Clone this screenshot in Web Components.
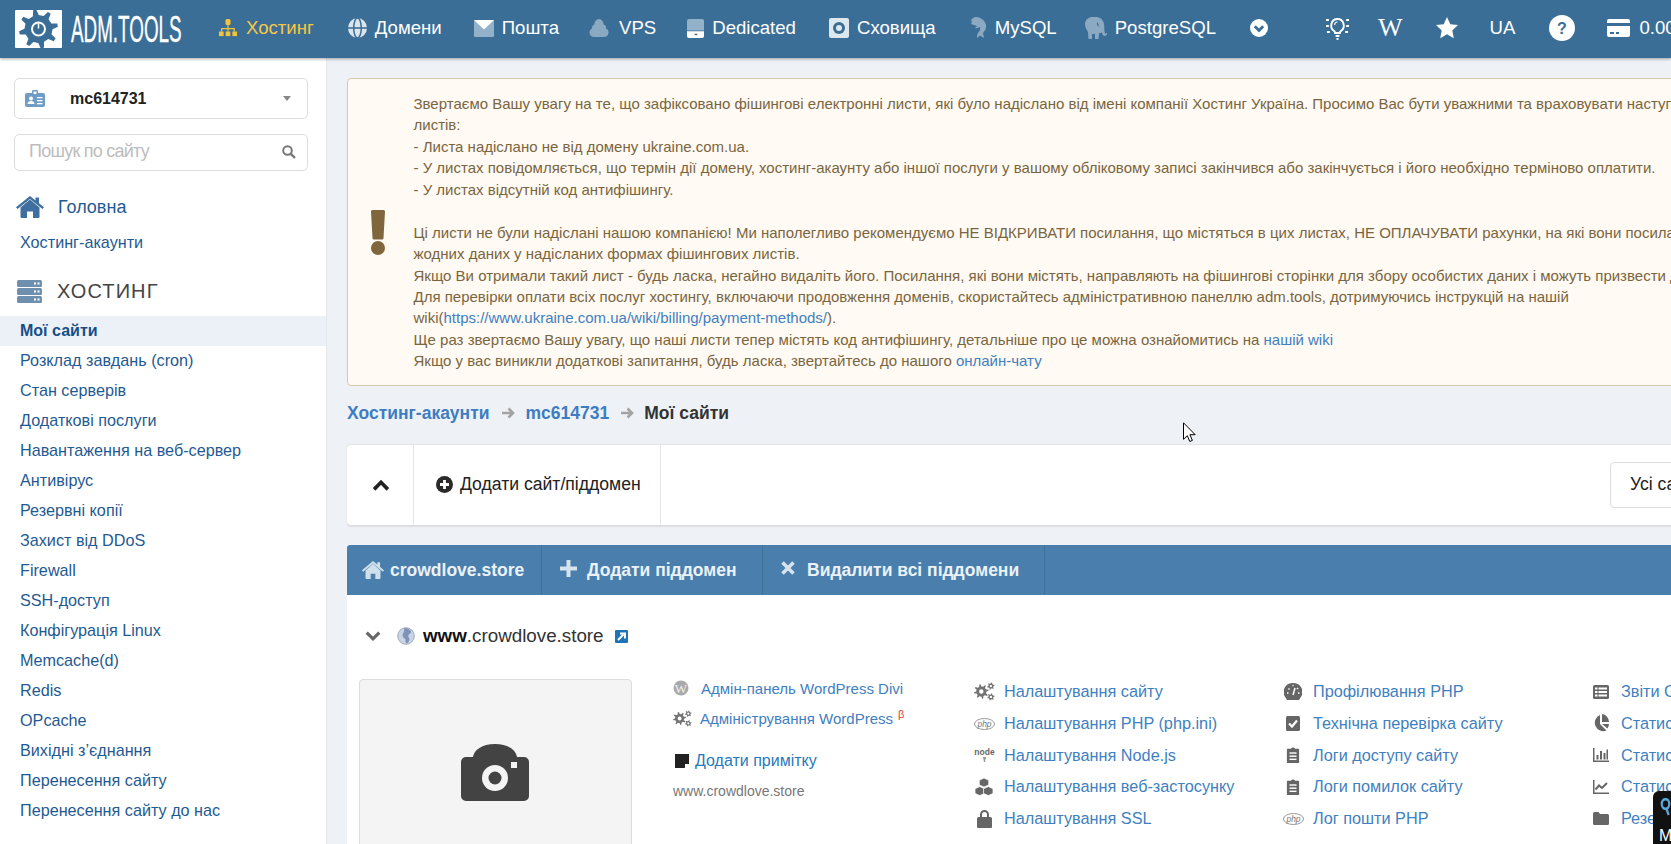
<!DOCTYPE html>
<html lang="uk">
<head>
<meta charset="utf-8">
<title>ADM.TOOLS</title>
<style>
html,body{margin:0;padding:0;height:100%;overflow:hidden;background:#eef2f6;font-family:"Liberation Sans",Arial,sans-serif}
</style>
</head>
<body>
<adm-app></adm-app>
<script>
function gear(cx,cy,r,rIn,n,hole){
  let d='';const st=Math.PI*2/n;
  for(let i=0;i<n;i++){
    const a=i*st-st/2;
    const pts=[[rIn,a-st*.02],[r,a+st*.14],[r,a+st*.36],[rIn,a+st*.52]];
    pts.forEach((p,j)=>{const x=cx+p[0]*Math.cos(p[1]),y=cy+p[0]*Math.sin(p[1]);d+=(i==0&&j==0?'M':'L')+x.toFixed(2)+' '+y.toFixed(2)});
  }
  d+='Z';
  if(hole){d+=`M${cx-hole} ${cy}a${hole} ${hole} 0 1 0 ${hole*2} 0a${hole} ${hole} 0 1 0 ${-hole*2} 0Z`}
  return d;
}
const gearsSvg=`<g fill="#737373"><path fill-rule="evenodd" d="${gear(8,10.5,8,5.6,8,2.4)}"/><path fill-rule="evenodd" d="${gear(18.5,4.5,4,2.8,6,1.3)}"/><path fill-rule="evenodd" d="${gear(18.5,16.5,4,2.8,6,1.3)}"/></g>`;
const clip=`<path fill="#666" d="M2 3h3.500a3 3 0 0 1 5 0H14a1 1 0 0 1 1 1v14a1 1 0 0 1-1 1H2a1 1 0 0 1-1-1V4a1 1 0 0 1 1-1z"/><g fill="#fff"><rect x="4" y="7" width="8" height="1.600"/><rect x="4" y="10.500" width="8" height="1.600"/><rect x="4" y="14" width="8" height="1.600"/></g>`;
const ICONS={
 hier:['0 0 18 18',`<g fill="#f5c33b"><rect x="6.500" y="0" width="5" height="6" rx="1.500"/><rect x="0" y="12.500" width="4.600" height="4.600"/><rect x="6.700" y="12.500" width="4.600" height="4.600"/><rect x="13.400" y="12.500" width="4.600" height="4.600"/><path d="M8.400 6h1.200v3h6.200v3.500h-1.200v-2.300H9.600v2.300H8.400v-2.300H3.200v2.300H2V9h6.400z"/></g>`],
 globe:['0 0 20 20',`<circle cx="10" cy="10" r="10" fill="#dbe5ec"/><g fill="none" stroke="#3b6e96" stroke-width="1.600"><ellipse cx="10" cy="10" rx="4" ry="10"/><path d="M0 10h20"/></g>`],
 mail:['0 0 20 18',`<rect y="0" width="20" height="18" rx="1" fill="#93b2c9"/><path d="M0 0h20L10 10z" fill="#fff"/>`],
 cloud:['0 0 20 20',`<path fill="#8baac2" d="M5 19a4.500 4.500 0 0 1-2-8.500 4 4 0 0 1 2.500-4.200A4.800 4.800 0 0 1 10 1a4.800 4.800 0 0 1 4.400 5.200 4 4 0 0 1 2.700 4.300A4.500 4.500 0 0 1 15 19z"/>`],
 ded:['0 0 18 20',`<path fill="#93b2c9" d="M2 0h14a2 2 0 0 1 2 2v10H0V2a2 2 0 0 1 2-2z"/><path fill="#fff" d="M0 13h18v5a2 2 0 0 1-2 2H2a2 2 0 0 1-2-2z"/><rect x="8" y="15.500" width="3" height="1.500" fill="#3b6e96"/>`],
 stor:['0 0 20 20',`<rect width="20" height="20" rx="2" fill="#dce7ee"/><circle cx="10" cy="10" r="6" fill="#3b6e96"/><circle cx="10" cy="10" r="3" fill="#dce7ee"/>`],
 dolphin:['0 0 17 22',`<path fill="#8baac2" d="M6 0c4 0 9 3 10 8 .5 3-1 6-3 8l1 5-4-2.500-3 2.500c0-2 0-3 1-5 2-2 2.500-4 2-6-1.500 1-3.500 1.500-5 1l2-2-6-2C2 6 2 4 1 3c2-2 3-3 5-3z"/>`],
 eleph:['0 0 22 22',`<path fill="#8baac2" d="M9 0c5-.5 9 2 10 7 .4 3 .2 6 .8 9 .2 1 1.200 1 1.200 0h1c0 2.500-2 3.500-3.500 2.500-1-.7-1.300-2-1.500-3-1 .5-2 .7-3 .8l-.5 5.700h-3.500v-5H7v5H3.500l-.5-7C1.500 12.500 0 10 0 7 0 3 4-.5 9 0z"/><path fill="#3b6e96" d="M12 5c-.5 2 0 4 2 4.500-.3-1.500-.5-3-2-4.500z"/>`],
 chevc:['0 0 18 18',`<circle cx="9" cy="9" r="9" fill="#fff"/><path d="M4.800 7.300 9 11.500l4.200-4.200" fill="none" stroke="#3b6e96" stroke-width="2.800"/>`],
 bulb:['0 0 24 24',`<g fill="none" stroke="#fff"><path stroke-width="2" d="M12 3a6.500 6.500 0 0 0-3.500 12c.6.500 1 1 1 2h5c0-1 .4-1.500 1-2A6.500 6.500 0 0 0 12 3z"/><path stroke-width="2" d="M10 20h4M11 23h2"/><path stroke-width="1.200" d="M12 6a3 3 0 0 0-3 3"/></g><g fill="#fff"><rect x="0" y="3" width="3" height="2"/><rect x="0" y="9" width="3" height="2"/><rect x="1" y="15" width="3" height="2"/><rect x="21" y="3" width="3" height="2"/><rect x="21" y="9" width="3" height="2"/><rect x="20" y="15" width="3" height="2"/></g>`],
 star:['0 0 22 22',`<path fill="#fff" d="M11 0l3.300 7.200 7.700.9-5.700 5.300 1.500 7.800L11 17.300 4.200 21.200l1.500-7.800L0 8.100l7.700-.9z"/>`],
 q:['0 0 26 26',`<ellipse cx="13" cy="13" rx="13" ry="13" fill="#fff"/><text x="13" y="19" text-anchor="middle" font-family="Liberation Sans" font-weight="700" font-size="16" fill="#3b6e96">?</text>`],
 card:['0 0 23 18',`<path fill="#fff" d="M2 0h19a2 2 0 0 1 2 2v2H0V2a2 2 0 0 1 2-2zM0 7h23v9a2 2 0 0 1-2 2H2a2 2 0 0 1-2-2zm3 6v2h4v-2zm6 0v2h3v-2z"/>`],
 idcard:['0 0 20 17',`<path fill="#6f9cc4" d="M2 3h5V1.500C7 .5 7.500 0 8.500 0h3c1 0 1.500.5 1.500 1.500V3h5a2 2 0 0 1 2 2v10a2 2 0 0 1-2 2H2a2 2 0 0 1-2-2V5a2 2 0 0 1 2-2z"/><g fill="#fff"><rect x="8.500" y="1.500" width="3" height="2.500"/><circle cx="6" cy="8.500" r="2"/><path d="M2.500 14c0-2 1.500-3 3.500-3s3.500 1 3.500 3z"/><rect x="12" y="7" width="5.500" height="1.300"/><rect x="12" y="10" width="5.500" height="1.300"/><rect x="12" y="13" width="5.500" height="1.300"/></g>`],
 search:['0 0 14 14',`<circle cx="5.500" cy="5.500" r="4.300" fill="none" stroke="#777" stroke-width="2"/><path d="M8.800 8.800 13 13" stroke="#777" stroke-width="2.400"/>`],
 home:['0 0 28 22',`<path fill="currentColor" d="M14 3.500 4.500 11.500V21a1 1 0 0 0 1 1H11v-6.500h6V22h5.500a1 1 0 0 0 1-1v-9.500z"/><path fill="currentColor" d="M14 0 0 11.200l1.500 1.800L14 3l12.500 10 1.500-1.800-5-4V1.500h-3.500v2.900z"/>`],
 server:['0 0 25 23',`<g fill="#6f8faf"><rect width="25" height="7" rx="1.500"/><rect y="8" width="25" height="7" rx="1.500"/><rect y="16" width="25" height="7" rx="1.500"/></g><g fill="#fff"><rect x="17" y="2.500" width="2" height="2"/><rect x="20.500" y="2.500" width="2" height="2"/><rect x="17" y="10.500" width="2" height="2"/><rect x="20.500" y="10.500" width="2" height="2"/><rect x="17" y="18.500" width="2" height="2"/><rect x="20.500" y="18.500" width="2" height="2"/></g>`],
 bang:['0 0 14 45',`<path fill="#7f663d" d="M1.500 0h11A1.500 1.500 0 0 1 14 1.500L12.500 28a1.500 1.500 0 0 1-1.500 1.500H3A1.500 1.500 0 0 1 1.500 28L0 1.500A1.500 1.500 0 0 1 1.500 0z"/><circle cx="7" cy="38" r="7" fill="#7f663d"/>`],
 arrow:['0 0 14 14',`<path d="M1 7h11M7.500 2.500 12 7l-4.500 4.500" fill="none" stroke="#a3a3a3" stroke-width="2.600"/>`],
 up:['0 0 17 11',`<path d="M2 9.500 8.500 3l6.500 6.500" fill="none" stroke="#222" stroke-width="3.400"/>`],
 plusc:['0 0 17 17',`<circle cx="8.500" cy="8.500" r="8.500" fill="#2a2a2a"/><path d="M8.500 4v9M4 8.500h9" stroke="#fff" stroke-width="2.800"/>`],
 plus:['0 0 17 17',`<path d="M8.500 0v17M0 8.500h17" stroke="#d6e4ee" stroke-width="4"/>`],
 x:['0 0 14 14',`<path d="M1.500 1.500l11 11M12.500 1.500l-11 11" stroke="#d6e4ee" stroke-width="3.600"/>`],
 down:['0 0 14 9',`<path d="M1.500 1.500 7 7l5.500-5.500" fill="none" stroke="#666" stroke-width="2.800"/>`],
 wglobe:['0 0 18 18',`<circle cx="9" cy="9" r="8.300" fill="#c9d4e6" stroke="#9fa9b8" stroke-width="1"/><path fill="#7f93b8" d="M7 1.500c3-1 6 1 7 3 .5 1.500-.5 2-2 2.500-1 1.500-1 3 .5 4.500 0 2-1 4-2.500 5-2-1-1.500-3-1.500-4.500-2-1-3-2.500-3-4.500 1-2 2-3 1.500-6z"/>`],
 ext:['0 0 13 13',`<rect width="13" height="13" rx="1" fill="#1f74b8"/><path d="M3 10l5.500-5.500M5 3.500h5v5" fill="none" stroke="#fff" stroke-width="2"/>`],
 camera:['0 0 68 57',`<path fill="#434343" d="M5 13h7c1-7 9-13 22-13s21 6 22 13h7a5 5 0 0 1 5 5v34a5 5 0 0 1-5 5H5a5 5 0 0 1-5-5V18a5 5 0 0 1 5-5z"/><circle cx="34" cy="34" r="13" fill="#f4f4f4"/><circle cx="34" cy="34" r="6.500" fill="#434343"/><rect x="50" y="18" width="6" height="6" fill="#f4f4f4"/>`],
 wp:['0 0 16 16',`<circle cx="8" cy="8" r="7.500" fill="#aaa"/><text x="8" y="12.500" text-anchor="middle" font-family="Liberation Serif" font-size="13" fill="#eee">W</text>`],
 gears:['0 0 23 21',gearsSvg],
 note:['0 0 14 14',`<path fill="#222" d="M0 0h14v9.500L9.500 14H0z"/><path fill="#fff" d="M10 14v-4h4z"/>`],
 php:['0 0 21 12',`<ellipse cx="10.500" cy="6" rx="10" ry="5.500" fill="#fff" stroke="#999"/><text x="10.500" y="8.800" text-anchor="middle" font-family="Liberation Sans" font-style="italic" font-size="8.500" fill="#777">php</text>`],
 node:['0 0 21 14',`<text x="10.500" y="7" text-anchor="middle" font-family="Liberation Sans" font-weight="700" font-size="8.500" fill="#666">node</text><path d="M9 9h3l-1 5h-1z" fill="#999"/>`],
 cubes:['0 0 19 19',`<g fill="#666" stroke="#fff" stroke-width=".8"><path d="M9.500 0l5 2.300v5l-5 2.300-5-2.300v-5z"/><path d="M5 9l5 2.300v5L5 18.600 0 16.300v-5z"/><path d="M14 9l5 2.300v5l-5 2.300-5-2.300v-5z"/></g>`],
 lock:['0 0 15 19',`<path fill="#666" d="M3 8V5.500a4.500 4.500 0 0 1 9 0V8h1.500A1.500 1.500 0 0 1 15 9.500V18a1 1 0 0 1-1 1H1a1 1 0 0 1-1-1V9.500A1.500 1.500 0 0 1 1.500 8zm2 0h5V5.500a2.500 2.500 0 0 0-5 0z"/>`],
 gauge:['0 0 18 17',`<path fill="#666" d="M9 0a9 9 0 0 1 7.500 14.500L15 17H3l-1.500-2.500A9 9 0 0 1 9 0z"/><g stroke="#fff" stroke-width="1.500"><path d="M9 12l2-7"/><path d="M3 10h1.500M4.500 5.500l1 1M13 6l1-1M14 10h1.500M8.500 2.500h1"/></g>`],
 check:['0 0 14 15',`<rect width="14" height="15" rx="1.500" fill="#666"/><path d="M3 7.500l3 3 5-6" fill="none" stroke="#fff" stroke-width="2.200"/>`],
 clip:['0 0 16 20',clip],
 table:['0 0 16 14',`<rect width="16" height="14" rx="1.500" fill="#666"/><g fill="#fff"><rect x="2" y="2.500" width="2.500" height="2"/><rect x="5.500" y="2.500" width="8.500" height="2"/><rect x="2" y="6" width="2.500" height="2"/><rect x="5.500" y="6" width="8.500" height="2"/><rect x="2" y="9.500" width="2.500" height="2"/><rect x="5.500" y="9.500" width="8.500" height="2"/></g>`],
 pie:['0 0 16 19',`<path fill="#666" d="M7 1v9l6.500 6.500A8 8 0 1 1 7 1z"/><path fill="#666" d="M9 0a8 8 0 0 1 7 8H9zM9 10h7a8 8 0 0 1-1.500 4.500z"/>`],
 bars:['0 0 16 14',`<path fill="#666" d="M0 0h1.500v12.500H16V14H0zM3.500 7h2v4.500h-2zM7 3h2v8.500H7zM10.500 5h2v6.500h-2zM13.500 1.500h1.500v10h-1.500z"/>`],
 line:['0 0 16 14',`<path fill="#666" d="M0 0h1.500v12.500H16V14H0z"/><path fill="none" stroke="#666" stroke-width="2" d="M2.500 9.500l3.500-4 3 2.500 5-5"/>`],
 folder:['0 0 16 13',`<path fill="#666" d="M1.500 0h4L7 2h7.500A1.500 1.500 0 0 1 16 3.500V11.500a1.500 1.500 0 0 1-1.500 1.500h-13A1.500 1.500 0 0 1 0 11.500v-10A1.500 1.500 0 0 1 1.500 0z"/>`],
 logo:['0 0 47 38',`<rect width="47" height="38" rx="1" fill="#fff"/><path fill="#3b6e96" d="${gear(23.5,19,19.5,14,8)}"/><circle cx="23.500" cy="19" r="6.500" fill="none" stroke="#fff" stroke-width="2"/><path d="M23.500 14v5" stroke="#3b6e96" stroke-width="3"/><path d="M23.500 13.500v5" stroke="#fff" stroke-width="1.500"/>`],
 widget:['0 0 14 18',`<circle cx="7" cy="6" r="4.800" fill="none" stroke="#5aa6d8" stroke-width="2.800"/><path d="M8 10l3 7" stroke="#5aa6d8" stroke-width="3"/>`],
 cursor:['0 0 13 21',`<path fill="#fff" stroke="#000" stroke-width="1" d="M.5.800v16.500l3.800-3.600 2.500 5.800 2.600-1.100-2.500-5.700h5.300z"/>`]
};
function define(name,html,extra){
  const t=document.createElement('template');t.innerHTML=html;
  customElements.define(name,class extends HTMLElement{
    constructor(){super();this.attachShadow({mode:'open'}).appendChild(t.content.cloneNode(true));}
    connectedCallback(){extra&&extra.call(this)}
  });
}
customElements.define('x-icon',class extends HTMLElement{
  connectedCallback(){
    if(this.shadowRoot)return;
    const [vb,body]=ICONS[this.getAttribute('n')];
    const w=this.getAttribute('w'),h=this.getAttribute('h');
    this.attachShadow({mode:'open'}).innerHTML=`<style>:host{display:inline-flex;flex:none;line-height:0}</style><svg xmlns="http://www.w3.org/2000/svg" viewBox="${vb}" width="${w}" height="${h}" preserveAspectRatio="none" fill="currentColor">${body}</svg>`;
  }
});
define('nav-item',`<style>
:host{display:flex;align-items:center;flex:none;gap:8px;color:#fff;font-size:18.6px;white-space:nowrap;margin-bottom:2px}
:host([active]){color:#f7c744}
</style><slot name="icon"></slot><slot></slot>`);
define('top-bar',`<style>
:host{display:flex;align-items:center;height:58px;flex:none;background:#3b6e96;box-shadow:0 1px 3px rgba(0,0,0,.35);position:relative;z-index:2;overflow:hidden;padding-left:15px;box-sizing:border-box}
.name{display:inline-block;color:#fff;font-size:37.7px;line-height:38px;transform:scaleX(.5);transform-origin:0 50%;-webkit-text-stroke:.35px #fff;width:109px;margin-left:9px;white-space:nowrap}
</style><x-icon n="logo" w="47" h="38"></x-icon><span class="name">ADM.TOOLS</span><slot></slot>`);
define('side-link',`<style>
:host{display:flex;align-items:center;height:30px;box-sizing:border-box;padding:0 0 2px 20px;font-size:16.2px;color:#1f5a92}
:host([active]){background:#ecf1f8;font-weight:700;color:#174e86;font-size:16px;padding-bottom:0}
</style><slot></slot>`);
define('side-bar',`<style>
:host{display:flex;flex-direction:column;width:327px;flex:none;box-sizing:border-box;background:#fff;border-right:1px solid #e4e7ea;padding-top:20px;overflow:hidden}
.sel{display:flex;align-items:center;height:41px;box-sizing:border-box;margin:0 18px 0 14px;border:1px solid #ddd;border-radius:5px;padding:0 16px 0 10px}
.sel b{font-size:16px;color:#222;margin-left:25px;flex:1}
.caret{width:0;height:0;border:4px solid transparent;border-top:5px solid #888;border-bottom:0}
.srch{display:flex;align-items:center;justify-content:space-between;height:37px;box-sizing:border-box;margin:15px 18px 0 14px;border:1px solid #ddd;border-radius:5px;padding:0 11px 2px 14px;color:#bdbdbd;font-size:18px;letter-spacing:-.75px}
.home{display:flex;align-items:center;gap:14px;margin:25px 0 0 16px;height:22px;color:#3f6f9e}
.home span{font-size:18px;color:#1f5a92}
.acc{margin-top:10px}
.hd{display:flex;align-items:center;gap:15px;margin:22px 0 13px 17px;height:23px;font-size:20px;letter-spacing:1.1px;color:#444}
</style>
<div class="sel"><x-icon n="idcard" w="20" h="17"></x-icon><b>mc614731</b><i class="caret"></i></div>
<div class="srch"><span>Пошук по сайту</span><x-icon n="search" w="14" h="14"></x-icon></div>
<div class="home"><x-icon n="home" w="28" h="22"></x-icon><span>Головна</span></div>
<div class="acc"><side-link>Хостинг-акаунти</side-link></div>
<div class="hd"><x-icon n="server" w="25" h="23"></x-icon><span>ХОСТИНГ</span></div>
<slot></slot>`);
define('alert-box',`<style>
:host{display:flex;box-sizing:border-box;width:1400px;height:308px;background:#fffaf3;border:1px solid #d8cbac;border-radius:4px;padding:14px 0;color:#7a6540;font-size:15px;line-height:21.43px;white-space:nowrap}
.i{width:65.5px;flex:none;display:flex;align-items:center;padding-left:23px;box-sizing:border-box}
</style><div class="i"><x-icon n="bang" w="14" h="45"></x-icon></div><div><slot></slot></div>`);
define('bread-crumbs',`<style>
:host{display:flex;align-items:center;gap:11px;height:54px;margin-bottom:4px;font-size:17.5px;font-weight:700;color:#3e7cc2;white-space:nowrap}
.last{color:#333;margin-left:-1px}
</style><span>Хостинг-акаунти</span><x-icon n="arrow" w="14" h="14"></x-icon><span>mc614731</span><x-icon n="arrow" w="14" h="14"></x-icon><span class="last">Мої сайти</span>`);
define('tool-bar',`<style>
:host{display:flex;align-items:stretch;box-sizing:border-box;width:1400px;height:81px;background:#fff;border-top:1px solid #e2e4e6;border-radius:4px;box-shadow:0 2px 1px #dcdee2,0 0 1px #ddd;font-size:17.6px;color:#222;white-space:nowrap}
.c{width:67px;flex:none;display:flex;align-items:center;justify-content:center;border-right:1px solid #e6e6e6;box-sizing:border-box;padding-left:2px}
.a{display:flex;align-items:center;gap:7px;padding:0 19px 2px 22px;border-right:1px solid #e6e6e6}
.sp{flex:1}
.f{align-self:center;margin-right:17px;border:1px solid #ddd;border-radius:4px;height:46px;width:120px;box-sizing:border-box;padding:0 0 2px 19px;display:flex;align-items:center}
</style><div class="c"><x-icon n="up" w="18" h="12"></x-icon></div><div class="a"><x-icon n="plusc" w="17" h="17"></x-icon><span>Додати сайт/піддомен</span></div><div class="sp"></div><div class="f">Усі сайти</div>`);
define('bar-seg',`<style>
:host{display:flex;align-items:center;height:50px;box-sizing:border-box;border-right:1px solid #3f7299;font-size:17.5px;font-weight:700;color:#eaf2f8;white-space:nowrap}
</style><slot></slot>`);
define('ico-link',`<style>
:host{display:flex;align-items:center;height:31.7px;font-size:16.25px;color:#3f80c0;white-space:nowrap}
.b{width:20px;display:flex;justify-content:center;margin-right:10px;flex:none}
</style><span class="b"><slot name="i"></slot></span><slot></slot>`);
define('site-panel',`<style>
:host{display:block;width:1400px;background:#fff;margin-top:20px}
.bar{display:flex;background:#4a7fad;height:50px;border-radius:3px 3px 0 0}
.h{padding-left:15px;padding-right:18px;width:195px;box-sizing:border-box;gap:6px}
.p{padding-left:18px;width:221px;box-sizing:border-box;gap:10px}
.x{padding-left:18px;width:282px;box-sizing:border-box;gap:12px}
.up{margin-top:-4px;display:flex}
.www{display:flex;align-items:center;height:84px;padding:0 0 2px 18px;box-sizing:border-box;font-size:18.8px;color:#333;white-space:nowrap}
.www b{color:#111;font-weight:700}
.body{display:flex;padding-left:12px}
.shot{width:273px;height:260px;flex:none;box-sizing:border-box;background:#f4f4f4;border:1px solid #ddd;border-radius:4px;display:flex;justify-content:center;padding:64px 2px 0 0}
.mid{width:301px;margin-left:41px;flex:none;font-size:15px;color:#3f80c0;white-space:nowrap}
.m{display:flex;align-items:center;height:30px}
.m:first-child{margin-top:-6px}
sup{color:#e03b3b;font-size:11px;line-height:0;margin:-8px 0 0 5px}
.n{margin-top:13px;font-size:16px;height:30px;gap:6px;color:#2878bd;padding-left:2px}
.u{color:#777;font-size:14px}
.cols{display:grid;grid-template-columns:309px 308px 320px;margin-top:-3px;align-self:flex-start}
</style>
<div class="bar"><bar-seg class="h"><x-icon n="home" w="22" h="18" style="color:#cfe0ec"></x-icon><span>crowdlove.store</span></bar-seg><bar-seg class="p"><span class="up"><x-icon n="plus" w="17" h="17"></x-icon></span><span>Додати піддомен</span></bar-seg><bar-seg class="x"><span class="up"><x-icon n="x" w="14" h="14"></x-icon></span><span>Видалити всі піддомени</span></bar-seg></div>
<div class="www"><x-icon n="down" w="16" h="10"></x-icon><span style="width:16px"></span><x-icon n="wglobe" w="18" h="18"></x-icon><span style="width:8px"></span><span><b>www</b>.crowdlove.store</span><span style="width:11px"></span><x-icon n="ext" w="13" h="13"></x-icon></div>
<div class="body">
<div class="shot"><x-icon n="camera" w="68" h="57"></x-icon></div>
<div class="mid">
<div class="m"><x-icon n="wp" w="16" h="16"></x-icon><span style="margin-left:12px">Адмін-панель WordPress Divi</span></div>
<div class="m"><x-icon n="gears" w="19" h="17"></x-icon><span style="margin-left:8px">Адміністрування WordPress</span><sup>β</sup></div>
<div class="m n"><x-icon n="note" w="14" h="14"></x-icon><span>Додати примітку</span></div>
<div class="m u">www.crowdlove.store</div>
</div>
<div class="cols"><slot></slot></div>
</div>`);
define('adm-app',`<style>
:host{display:flex;flex-direction:column;height:844px;overflow:hidden;font-family:"Liberation Sans",Arial,sans-serif}
.row{display:flex;flex:1;min-height:0}
main{flex:1;min-width:0;overflow:hidden;padding:20px 0 0 20px;box-sizing:border-box}
a{color:#3f80c0;text-decoration:none}
.cur{position:absolute;left:1183px;top:422px}
.wid{position:absolute;left:1653px;top:791px;width:18px;height:53px;overflow:hidden;background:#111;border-radius:6px 0 0 0;color:#fff;font-size:16px;padding:7px 0 0 7px;box-sizing:border-box}
.wid span{display:block;margin-top:7px;line-height:18px;margin-left:-1px}
</style>
<top-bar>
<nav-item active style="margin-left:39px;gap:9px"><x-icon slot="icon" n="hier" w="18" h="18"></x-icon>Хостинг</nav-item>
<nav-item style="margin-left:34px"><x-icon slot="icon" n="globe" w="19" h="20"></x-icon>Домени</nav-item>
<nav-item style="margin-left:32px"><x-icon slot="icon" n="mail" w="20" h="17"></x-icon>Пошта</nav-item>
<nav-item style="margin-left:30px;gap:10px"><x-icon slot="icon" n="cloud" w="20" h="20"></x-icon>VPS</nav-item>
<nav-item style="margin-left:31px"><x-icon slot="icon" n="ded" w="17" h="19"></x-icon>Dedicated</nav-item>
<nav-item style="margin-left:33px"><x-icon slot="icon" n="stor" w="20" h="20"></x-icon>Сховища</nav-item>
<nav-item style="margin-left:34px"><x-icon slot="icon" n="dolphin" w="17" h="22"></x-icon>MySQL</nav-item>
<nav-item style="margin-left:28px"><x-icon slot="icon" n="eleph" w="22" h="22"></x-icon>PostgreSQL</nav-item>
<nav-item style="margin-left:34px"><x-icon slot="icon" n="chevc" w="18" h="18"></x-icon></nav-item>
<nav-item style="margin-left:58px"><x-icon slot="icon" n="bulb" w="23" h="24"></x-icon></nav-item>
<nav-item style="margin-left:29px;font-family:'Liberation Serif';font-size:26px">W</nav-item>
<nav-item style="margin-left:33px"><x-icon slot="icon" n="star" w="22" h="22"></x-icon></nav-item>
<nav-item style="margin-left:32px">UA</nav-item>
<nav-item style="margin-left:34px"><x-icon slot="icon" n="q" w="26" h="26"></x-icon></nav-item>
<nav-item style="margin-left:32px;gap:9px"><x-icon slot="icon" n="card" w="23" h="18"></x-icon>0.00</nav-item>
</top-bar>
<div class="row">
<side-bar>
<side-link active>Мої сайти</side-link>
<side-link>Розклад завдань (cron)</side-link>
<side-link>Стан серверів</side-link>
<side-link>Додаткові послуги</side-link>
<side-link>Навантаження на веб-сервер</side-link>
<side-link>Антивірус</side-link>
<side-link>Резервні копії</side-link>
<side-link>Захист від DDoS</side-link>
<side-link>Firewall</side-link>
<side-link>SSH-доступ</side-link>
<side-link>Конфігурація Linux</side-link>
<side-link>Memcache(d)</side-link>
<side-link>Redis</side-link>
<side-link>OPcache</side-link>
<side-link>Вихідні з’єднання</side-link>
<side-link>Перенесення сайту</side-link>
<side-link>Перенесення сайту до нас</side-link>
</side-bar>
<main>
<alert-box>
Звертаємо Вашу увагу на те, що зафіксовано фішингові електронні листи, які було надіслано від імені компанії Хостинг Україна. Просимо Вас бути уважними та враховувати наступні<br>
листів:<br>
- Листа надіслано не від домену ukraine.com.ua.<br>
- У листах повідомляється, що термін дії домену, хостинг-акаунту або іншої послуги у вашому обліковому записі закінчився або закінчується і його необхідно терміново оплатити.<br>
- У листах відсутній код антифішингу.<br>
<br>
Ці листи не були надіслані нашою компанією! Ми наполегливо рекомендуємо НЕ ВІДКРИВАТИ посилання, що містяться в цих листах, НЕ ОПЛАЧУВАТИ рахунки, на які вони посилаються<br>
жодних даних у надісланих формах фішингових листів.<br>
Якщо Ви отримали такий лист - будь ласка, негайно видаліть його. Посилання, які вони містять, направляють на фішингові сторінки для збору особистих даних і можуть призвести до<br>
Для перевірки оплати всіх послуг хостингу, включаючи продовження доменів, скористайтесь адміністративною панеллю adm.tools, дотримуючись інструкцій на нашій<br>
wiki(<a>https://www.ukraine.com.ua/wiki/billing/payment-methods/</a>).<br>
Ще раз звертаємо Вашу увагу, що наші листи тепер містять код антифішингу, детальніше про це можна ознайомитись на <a>нашій wiki</a><br>
Якщо у вас виникли додаткові запитання, будь ласка, звертайтесь до нашого <a>онлайн-чату</a>
</alert-box>
<bread-crumbs></bread-crumbs>
<tool-bar></tool-bar>
<site-panel>
<ico-link><x-icon slot="i" n="gears" w="21" h="19"></x-icon>Налаштування сайту</ico-link>
<ico-link><x-icon slot="i" n="gauge" w="18" h="17"></x-icon>Профілювання PHP</ico-link>
<ico-link><x-icon slot="i" n="table" w="16" h="14"></x-icon>Звіти GoAccess</ico-link>
<ico-link><x-icon slot="i" n="php" w="21" h="12"></x-icon>Налаштування PHP (php.ini)</ico-link>
<ico-link><x-icon slot="i" n="check" w="14" h="15"></x-icon>Технічна перевірка сайту</ico-link>
<ico-link><x-icon slot="i" n="pie" w="16" h="19"></x-icon>Статистика</ico-link>
<ico-link><x-icon slot="i" n="node" w="21" h="14"></x-icon>Налаштування Node.js</ico-link>
<ico-link><x-icon slot="i" n="clip" w="14" h="18"></x-icon>Логи доступу сайту</ico-link>
<ico-link><x-icon slot="i" n="bars" w="16" h="14"></x-icon>Статистика</ico-link>
<ico-link><x-icon slot="i" n="cubes" w="18" h="18"></x-icon>Налаштування веб-застосунку</ico-link>
<ico-link><x-icon slot="i" n="clip" w="14" h="18"></x-icon>Логи помилок сайту</ico-link>
<ico-link><x-icon slot="i" n="line" w="16" h="14"></x-icon>Статистика</ico-link>
<ico-link><x-icon slot="i" n="lock" w="15" h="19"></x-icon>Налаштування SSL</ico-link>
<ico-link><x-icon slot="i" n="php" w="21" h="12"></x-icon>Лог пошти PHP</ico-link>
<ico-link><x-icon slot="i" n="folder" w="16" h="13"></x-icon>Резервні</ico-link>
</site-panel>
</main>
</div>
<x-icon class="cur" n="cursor" w="13" h="21"></x-icon>
<div class="wid"><x-icon n="widget" w="11" h="18"></x-icon><span>M</span></div>`);
</script>
</body>
</html>
